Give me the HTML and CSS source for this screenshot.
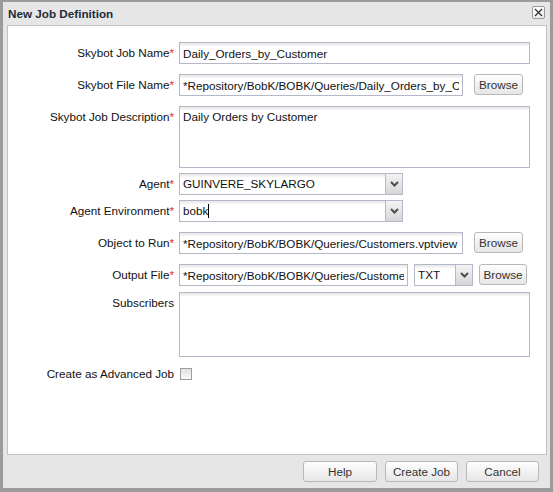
FILE: index.html
```
<!DOCTYPE html>
<html lang="en">
<head>
    <meta charset="UTF-8">
    <title>New Job Definition</title>
    <link rel="stylesheet" href="styles.css">
</head>
<body>
    <div class="window">
        <div class="window-header">
            <span class="window-title">New Job Definition</span>
            <span class="close-tool">
                <svg width="11" height="11" viewBox="0 0 11 11"><path d="M2 2 L9 9 M9 2 L2 9" stroke="#333" stroke-width="1.3" fill="none"/></svg>
            </span>
        </div>

        <div class="window-body">
            <!-- job -->
            <div class="row">
                <label class="field-label">Skybot Job Name<span class="req">*</span></label>
                <input class="text-input w-full" type="text" value="Daily_Orders_by_Customer">
            </div>
            <div class="row">
                <label class="field-label">Skybot File Name<span class="req">*</span></label>
                <input class="text-input w-browse" type="text" value="*Repository/BobK/BOBK/Queries/Daily_Orders_by_Customer.vptjob">
                <button class="btn browse-btn">Browse</button>
            </div>
            <div class="row tight">
                <label class="field-label">Skybot Job Description<span class="req">*</span></label>
                <textarea class="text-input text-area desc">Daily Orders by Customer</textarea>
            </div>

            <!-- agent -->
            <div class="row tight">
                <label class="field-label">Agent<span class="req">*</span></label>
                <div class="combo w-agent">
                    <span class="combo-text">GUINVERE_SKYLARGO</span>
                    <span class="trigger"><svg width="9" height="6" viewBox="0 0 9 6"><polyline points="1,1 4.5,4.5 8,1" stroke="#4d4d4d" stroke-width="2" fill="none"/></svg></span>
                </div>
            </div>
            <div class="row">
                <label class="field-label">Agent Environment<span class="req">*</span></label>
                <div class="combo w-agent">
                    <span class="combo-text">bobk<span class="caret"></span></span>
                    <span class="trigger"><svg width="9" height="6" viewBox="0 0 9 6"><polyline points="1,1 4.5,4.5 8,1" stroke="#4d4d4d" stroke-width="2" fill="none"/></svg></span>
                </div>
            </div>

            <!-- run / output -->
            <div class="row">
                <label class="field-label">Object to Run<span class="req">*</span></label>
                <input class="text-input w-browse" type="text" value="*Repository/BobK/BOBK/Queries/Customers.vptview">
                <button class="btn browse-btn">Browse</button>
            </div>
            <div class="row mid">
                <label class="field-label">Output File<span class="req">*</span></label>
                <input class="text-input w-output" type="text" value="*Repository/BobK/BOBK/Queries/Customers">
                <div class="combo w-type">
                    <span class="combo-text">TXT</span>
                    <span class="trigger"><svg width="9" height="6" viewBox="0 0 9 6"><polyline points="1,1 4.5,4.5 8,1" stroke="#4d4d4d" stroke-width="2" fill="none"/></svg></span>
                </div>
                <button class="btn browse-btn small">Browse</button>
            </div>
            <div class="row mid">
                <label class="field-label">Subscribers</label>
                <textarea class="text-input text-area subs"></textarea>
            </div>
            <div class="row">
                <label class="field-label">Create as Advanced Job</label>
                <input class="check" type="checkbox">
            </div>
        </div>

        <div class="window-footer">
            <button class="btn footer-btn help">Help</button>
            <button class="btn footer-btn">Create Job</button>
            <button class="btn footer-btn">Cancel</button>
        </div>
    </div>
</body>
</html>
```

FILE: styles.css
```
body {
    margin: 0;
    font-family: 'Liberation Sans', Arial, sans-serif;
    font-size: 11.7px;
    color: #111;
}

.window {
    width: 553px;
    height: 492px;
    box-sizing: border-box;
    border: 3px solid #9b9b9b;
    border-top-width: 2px;
    border-bottom-width: 4px;
    background: #e6e6e6;
    display: flex;
    flex-direction: column;
}

.window-header {
    height: 23px;
    display: flex;
    justify-content: space-between;
    align-items: flex-start;
    padding: 0 5px;
}

.window-title {
    line-height: 23px;
    font-weight: bold;
    color: #1d2b3a;
}

.close-tool {
    margin-top: 4px;
    width: 13px;
    height: 13px;
    box-sizing: border-box;
    border: 1px solid #9a9a9a;
    border-radius: 2px;
    background: linear-gradient(#ffffff, #ececec);
    display: flex;
    align-items: center;
    justify-content: center;
}

.window-body {
    height: 430px;
    box-sizing: border-box;
    margin: 0 3px 0 4px;
    border: 1px solid #c2c2c2;
    background: #fff;
    padding-top: 16px;
}

.row {
    display: flex;
    align-items: flex-start;
    margin-bottom: 10px;
}

.row.tight { margin-bottom: 5px; }
.row.mid { margin-bottom: 6px; }

.field-label {
    width: 166px;
    flex-shrink: 0;
    margin-right: 5px;
    text-align: right;
    line-height: 22px;
    white-space: nowrap;
}

.req { color: #e0282c; }

.text-input {
    box-sizing: border-box;
    height: 22px;
    margin: 0;
    padding: 0 3px;
    border: 1px solid #b5b8c8;
    background: #fff linear-gradient(#e6e6e6, #ffffff 4px);
    font: inherit;
    color: #111;
    outline: none;
}

.w-full { width: 351px; }
.w-browse { width: 284px; }
.w-output { width: 229px; }

.text-area {
    width: 351px;
    resize: none;
    padding: 3px;
    line-height: 14px;
}

.text-area.desc { height: 62px; }
.text-area.subs { height: 65px; }

.combo {
    display: flex;
    height: 22px;
    box-sizing: border-box;
    border: 1px solid #b5b8c8;
    background: #fff linear-gradient(#e6e6e6, #ffffff 4px);
}

.w-agent { width: 224px; }
.w-type { width: 59px; margin-left: 6px; }

.combo-text {
    flex: 1;
    padding: 0 3px;
    line-height: 20px;
    white-space: nowrap;
    overflow: hidden;
}

.caret {
    display: inline-block;
    width: 1px;
    height: 14px;
    background: #000;
    vertical-align: -3px;
}

.trigger {
    width: 16px;
    border-left: 1px solid #b5b8c8;
    background: linear-gradient(#f3f3f3, #d6d6d6);
    display: flex;
    align-items: center;
    justify-content: center;
}

.btn {
    box-sizing: border-box;
    height: 21px;
    margin: 0;
    padding: 0;
    border: 1px solid #b8b8b8;
    border-radius: 3px;
    background: linear-gradient(#fefefe, #e6e6e6);
    font: inherit;
    color: #333;
}

.browse-btn {
    width: 49px;
    margin-left: 11px;
}

.browse-btn.small {
    width: 48px;
    margin-left: 6px;
}

.check {
    appearance: none;
    width: 12px;
    height: 12px;
    box-sizing: border-box;
    margin: 5px 0 0 1px;
    border: 1px solid #9d9d9d;
    background: linear-gradient(#e2e2e2, #fbfbfb);
}

.window-footer {
    flex: 1;
    display: flex;
    justify-content: flex-end;
    align-items: flex-start;
    gap: 8px;
    padding: 6px 11px 0 0;
}

.footer-btn { width: 73px; }
.footer-btn.help { width: 74px; }
```
